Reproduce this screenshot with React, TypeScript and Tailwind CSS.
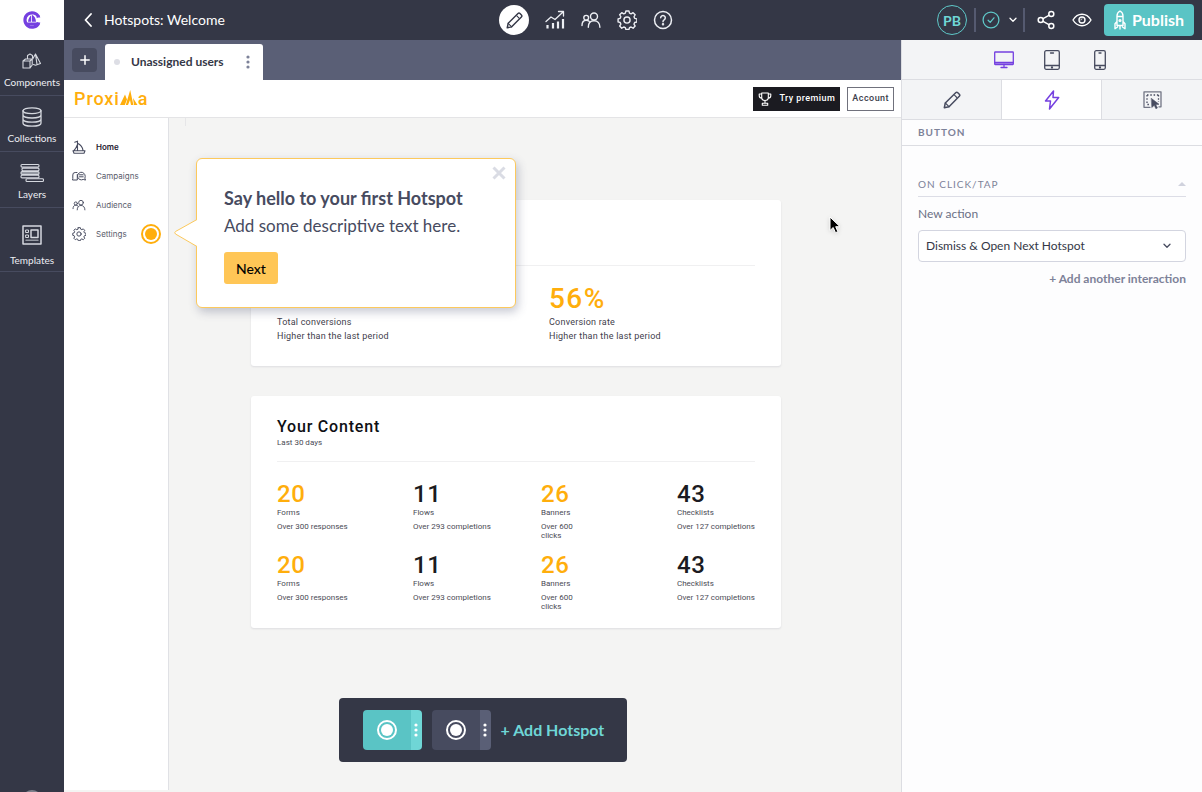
import React from "react";

type IconProps = { className?: string };

const stroke = {
  fill: "none",
  stroke: "currentColor",
  strokeLinecap: "round" as const,
  strokeLinejoin: "round" as const,
};

function Svg({ box, className, width = 1.5, children }: { box: string; className?: string; width?: number; children: React.ReactNode }) {
  return (
    <svg viewBox={box} className={className} {...stroke} strokeWidth={width} aria-hidden="true">
      {children}
    </svg>
  );
}

const LogoIcon = ({ className }: IconProps) => (
  <svg viewBox="0 0 18 18" className={className} aria-hidden="true">
    <path d="M15.700 6A7.200 7.200 0 1 0 15.700 12" fill="none" stroke="#7540e0" strokeWidth="3.200" />
    <path d="M8.200 4.200v6.600H5C5.300 8.100 6.500 5.600 8.200 4.200zM9 3.800c2.600 1.400 3.800 3.900 4 7H9zM4 11.600h11.500L14 14.400H5z" fill="#7540e0" />
    <path d="M13 6.500h4.300L16.500 4.500zM13 11.500h4.300L16.500 13.500z" fill="#7540e0" />
  </svg>
);

const PencilIcon = ({ className }: IconProps) => (
  <Svg box="0 0 18 18" className={className} width={1.5}>
    <path d="M1.300 16.700 2.300 12 12.700 1.700a1.500 1.500 0 0 1 2.100 0l1.500 1.500a1.500 1.500 0 0 1 0 2.100L6 15.700z" />
    <path d="M2.300 12 6 15.700M11.500 4.200l2.300 2.300" strokeWidth={1.100} />
  </Svg>
);

const ChartIcon = ({ className }: IconProps) => (
  <Svg box="0 0 20 20" className={className} width={1.3}>
    <path d="M1 11.500 6 7l4 2.500 7.500-7M13.500 1.500H18.500V6" />
    <path d="M2.500 15v3.500M8 13v5.500M13 11.500v7M18 9v9.500" strokeWidth={2.200} strokeLinecap="butt" />
  </Svg>
);

const PeopleIcon = ({ className }: IconProps) => (
  <Svg box="0 0 20 18" className={className} width={1.4}>
    <circle cx="13" cy="5.500" r="3.500" />
    <circle cx="5.200" cy="6.800" r="2.400" />
    <path d="M7.300 16.300c0-4 2.200-6.600 5.700-6.600s5.900 2.600 5.900 6.600M1 14.500c0-3.200 1.600-5.300 4.200-5.300 1.200 0 2.100.4 2.900 1.100" />
  </Svg>
);

const GearIcon = ({ className }: IconProps) => (
  <Svg box="0 0 24 24" className={className} width={1.7}>
    <path d="M10.200 2h3.600l.7 2.700 1.900.8 2.400-1.400 2.500 2.500-1.400 2.400.8 1.900 2.700.7v3.600l-2.700.7-.8 1.900 1.400 2.400-2.500 2.500-2.400-1.400-1.900.8-.7 2.300h-3.600l-.7-2.300-1.900-.8-2.400 1.400-2.500-2.500 1.400-2.400-.8-1.900L.8 15.200v-3.600l2.500-.7.8-1.900-1.400-2.400 2.500-2.500 2.400 1.400 1.900-.8z" transform="translate(.5 -.9)" />
    <circle cx="12" cy="12" r="3.700" />
  </Svg>
);

const HelpIcon = ({ className }: IconProps) => (
  <Svg box="0 0 20 20" className={className} width={1.5}>
    <circle cx="10" cy="10" r="8.500" />
    <path d="M7.700 7.800a2.300 2.300 0 1 1 3.500 2c-.8.500-1.200.9-1.200 1.900" />
    <circle cx="10" cy="14.300" r=".5" fill="currentColor" />
  </Svg>
);

const CheckCircleIcon = ({ className }: IconProps) => (
  <Svg box="0 0 20 20" className={className} width={1.4}>
    <circle cx="10" cy="10" r="8.800" />
    <path d="m6.800 10.300 2.300 2.300 4.200-5" />
  </Svg>
);

const ChevronDown = ({ className }: IconProps) => (
  <Svg box="0 0 10 6" className={className} width={1.3}>
    <path d="m2 1.200 3 3 3-3" />
  </Svg>
);

const ShareIcon = ({ className }: IconProps) => (
  <Svg box="0 0 18 20" className={className} width={1.500}>
    <circle cx="3.700" cy="10" r="2.500" />
    <circle cx="14.300" cy="4" r="2.500" />
    <circle cx="14.300" cy="16" r="2.500" />
    <path d="m6.100 8.700 5.800-3.300M6.100 11.300l5.800 3.300" />
  </Svg>
);

const EyeIcon = ({ className }: IconProps) => (
  <Svg box="0 0 20 14" className={className} width={1.400}>
    <path d="M1 7c2.200-3.700 5.300-5.800 9-5.800S16.800 3.300 19 7c-2.200 3.700-5.300 5.800-9 5.800S3.200 10.700 1 7z" />
    <circle cx="10" cy="7" r="3" />
    <path d="M8.800 7A1.200 1.200 0 0 1 10 5.800" strokeWidth={0.800} />
  </Svg>
);

const RocketIcon = ({ className }: IconProps) => (
  <Svg box="0 0 12 20" className={className} width={1.400}>
    <path d="M3 15.500V6c0-2 1.200-4 3-5 1.800 1 3 3 3 5v9.500zM3 6.500h6M3 11.500l-2 2.300v5L3.500 17M9 11.500l2 2.300v5L8.500 17M6 15.500V19" />
    <circle cx="6" cy="10.500" r=".9" />
  </Svg>
);

const ComponentsIcon = ({ className }: IconProps) => (
  <Svg box="0 0 20 18" className={className} width={1.100}>
    <path d="m13.500 2 5 9.500-5 1.700-2-.7M13.500 2l1.500 10.300M13.500 2l-2.800 5" />
    <path d="m1 9 2.500-2h6.700v6L8 16H1zM1 9h7l2.200-2M8 9v7M5.500 7V3.500L8 2l2.500 1.500V6" />
  </Svg>
);

const CollectionsIcon = ({ className }: IconProps) => (
  <Svg box="0 0 20 20" className={className} width={1.300}>
    <ellipse cx="10" cy="3.700" rx="9" ry="2.900" />
    <path d="M1 3.700v12.500c0 1.700 4 3 9 3s9-1.300 9-3V3.700M1 8c0 1.700 4 3 9 3s9-1.300 9-3M1 12.200c0 1.700 4 3 9 3s9-1.300 9-3" />
  </Svg>
);

const LayersIcon = ({ className }: IconProps) => (
  <Svg box="0 0 24 19" className={className} width={1.100}>
    <rect x="1" y="1" width="18" height="2.600" rx="1" />
    <rect x="2" y="4.600" width="17" height="2.600" rx="1" />
    <rect x="1" y="8" width="18" height="3" rx="1" fill="currentColor" fillOpacity=".6" />
    <rect x="1" y="11.800" width="18" height="2.600" rx="1" />
    <rect x="6" y="15.300" width="17.500" height="2.700" rx="1" />
  </Svg>
);

const TemplatesIcon = ({ className }: IconProps) => (
  <Svg box="0 0 20 20" className={className} width={1.500}>
    <rect x="1" y="1" width="18" height="18" />
    <rect x="9" y="5" width="7" height="7.500" />
    <rect x="4" y="5" width="2.500" height="2.500" strokeWidth={1} />
    <rect x="4" y="10" width="2.500" height="2.500" strokeWidth={1} />
    <path d="M4 15.200h12" strokeOpacity=".6" />
  </Svg>
);

const DesktopIcon = ({ className }: IconProps) => (
  <Svg box="0 0 20 18" className={className} width={1.300}>
    <rect x=".7" y="1" width="18.600" height="12.500" rx=".5" />
    <path d="M1 11.500h18M10 13.500V16M7 16.500h6" />
    <path d="M1 12.500h18" strokeOpacity=".5" />
  </Svg>
);

const TabletIcon = ({ className }: IconProps) => (
  <Svg box="0 0 16 20" className={className} width={1.300}>
    <rect x=".7" y=".7" width="14.600" height="18.600" rx="1.500" />
    <path d="M1 15.500h14M6.500 3h3" />
    <circle cx="8" cy="17.500" r=".5" fill="currentColor" />
  </Svg>
);

const PhoneIcon = ({ className }: IconProps) => (
  <Svg box="0 0 12 20" className={className} width={1.300}>
    <rect x=".7" y=".7" width="10.600" height="18.600" rx="1.500" />
    <path d="M1 15.500h10M5 3h2" />
    <circle cx="6" cy="17.500" r=".5" fill="currentColor" />
  </Svg>
);

const BoltIcon = ({ className }: IconProps) => (
  <Svg box="0 0 16 20" className={className} width={1.500}>
    <path d="M9.500 1 1.500 11h5l-1 8 9.200-11.500H9z" />
  </Svg>
);

const TargetIcon = ({ className }: IconProps) => (
  <Svg box="0 0 19 18" className={className} width={1.300}>
    <path d="M7 16.300H1V.8h17v15h-2" strokeOpacity=".75" />
    <path d="M4 4h11.500M4 4v9.500h3.500M15.500 4v7" strokeDasharray="1.500 1.800" strokeLinecap="butt" />
    <path d="m8.500 7.500 7.500 5.800-3.300.3 1.700 3.300-1.500.8-1.600-3.400-2.300 2z" fill="currentColor" strokeWidth={0.600} />
  </Svg>
);

const TrophyIcon = ({ className }: IconProps) => (
  <Svg box="0 0 14 14" className={className} width={1.100}>
    <path d="M3.700 1h6.600v4.500c0 2-1.300 3-3.300 3s-3.300-1-3.300-3zM3.700 2H1.200v1.500c0 1.700 1 2.700 2.700 2.700M10.300 2h2.500v1.500c0 1.700-1 2.700-2.700 2.700M7 8.500v2M4.300 13.200h5.400v-2H4.300z" />
  </Svg>
);

const BoatIcon = ({ className }: IconProps) => (
  <Svg box="0 0 14 14" className={className} width={1.100}>
    <path d="M1 10.700h12l-1 2.500H2zM5.500 1v9.500M5.500 3.300c3.500 1.700 5 4 5.500 7M5.500 4.500c-1 2.700-1.700 4.200-3.500 6M5.500 1.300 2.700 2.200" />
  </Svg>
);

const CampaignIcon = ({ className }: IconProps) => (
  <Svg box="0 0 14 10" className={className} width={1}>
    <path d="M5 1.500H3.200A2.400 2.400 0 0 0 .8 4v3.500L.5 9h4.800V3.500" />
    <path d="M13.200 5a3.800 3.800 0 1 0-2 3.400l2.300.7-.5-1.500zM7.500 3.800h3.700M7.500 5.800h3.700" />
  </Svg>
);

const sideTools = [
  { label: "Components", icon: <ComponentsIcon className="h-[18px] w-5" />, cls: "h-14 gap-[3px] pb-[5px]" },
  { label: "Collections", icon: <CollectionsIcon className="size-5" />, cls: "h-14 gap-[3px] pb-[5px]" },
  { label: "Layers", icon: <LayersIcon className="h-5 w-6" />, cls: "h-14 gap-[3px] pb-[5px]" },
  { label: "Templates", icon: <TemplatesIcon className="size-5" />, cls: "h-16 gap-[7px] pb-[3px]" },
];

function ToolSidebar() {
  return (
    <nav aria-label="Tools" className="flex w-16 shrink-0 flex-col bg-[#343746]">
      <a href="#home" aria-label="Dashboard" className="flex h-10 items-center justify-center bg-white">
        <LogoIcon className="size-[18px]" />
      </a>
      {sideTools.map((t) => (
        <button
          key={t.label}
          type="button"
          className={`${t.cls} flex flex-col items-center justify-end border-b border-[#474b5f] text-[10px] leading-4 text-[#eceef3]`}
        >
          <span className="flex h-5 items-center text-[#d5d8df]">{t.icon}</span>
          {t.label}
        </button>
      ))}
      <div className="mt-auto h-[2px] overflow-hidden">
        <div className="mx-auto size-5 rounded-full bg-[#7d808b]" />
      </div>
    </nav>
  );
}

function TopBar() {
  return (
    <header className="flex h-10 shrink-0 items-center bg-[#343746] pr-2 text-white">
      <div className="flex w-[435px] items-center gap-3 pl-5">
        <button type="button" aria-label="Back">
          <Svg box="0 0 8 14" className="h-[14px] w-2" width={1.800}>
            <path d="M7 1 1.500 7 7 13" />
          </Svg>
        </button>
        <h1 className="text-[14px] leading-5">Hotspots: Welcome</h1>
      </div>
      <nav aria-label="Sections" className="flex items-center gap-4 text-[#eceef3]">
        <button type="button" aria-label="Edit" className="flex size-[30px] items-center justify-center rounded-full bg-white text-[#343746]">
          <PencilIcon className="size-[17px]" />
        </button>
        <button type="button" aria-label="Analytics"><ChartIcon className="size-5" /></button>
        <button type="button" aria-label="Audience"><PeopleIcon className="h-[18px] w-5" /></button>
        <button type="button" aria-label="Settings"><GearIcon className="size-5" /></button>
        <button type="button" aria-label="Help"><HelpIcon className="size-5" /></button>
      </nav>
      <div className="ml-auto flex items-center">
        <span className="flex size-[30px] items-center justify-center rounded-full border border-[#5fc9c9] text-[14px] font-bold text-[#6fd6d6]">PB</span>
        <span className="ml-[7px] mr-[6px] h-6 w-[2px] bg-[#555a70]" />
        <button type="button" aria-label="Status" className="flex items-center gap-2">
          <CheckCircleIcon className="size-[18px] text-[#5fc9c9]" />
          <ChevronDown className="h-[6px] w-[10px]" />
        </button>
        <span className="ml-[5px] mr-3 h-6 w-[2px] bg-[#555a70]" />
        <button type="button" aria-label="Share"><ShareIcon className="h-5 w-[18px]" /></button>
        <button type="button" aria-label="Preview" className="ml-[17px] mr-3"><EyeIcon className="h-[14px] w-5" /></button>
        <button type="button" className="flex h-8 w-[90px] items-center justify-center gap-[6px] rounded-[4px] bg-[#5ac4c5] text-[16px] font-bold">
          <RocketIcon className="h-5 w-3" />
          Publish
        </button>
      </div>
    </header>
  );
}

function VerticalDots({ className }: IconProps) {
  return (
    <svg viewBox="0 0 4 14" className={className} fill="currentColor" aria-hidden="true">
      <circle cx="2" cy="2" r="1.600" />
      <circle cx="2" cy="7" r="1.600" />
      <circle cx="2" cy="12" r="1.600" />
    </svg>
  );
}

function TabBar() {
  return (
    <div className="flex h-10 shrink-0 items-end bg-[#5a5f76] pl-2">
      <button type="button" aria-label="Add segment" className="mb-2 mr-2 flex h-6 w-[25px] items-center justify-center rounded-[4px] bg-[#474b5f] text-white">
        <Svg box="0 0 10 10" className="size-[10px]" width={1.500}><path d="M5 .8v8.400M.8 5h8.400" /></Svg>
      </button>
      <div className="flex h-9 w-[158px] items-center whitespace-nowrap rounded-t-[3px] bg-white pl-[9px] text-[12px] font-bold text-[#343746]">
        <span className="mr-[11px] size-[6px] rounded-full bg-[#dddee5]" />
        Unassigned users
        <button type="button" aria-label="Tab options" className="ml-auto mr-[13px] text-[#7d8299]"><VerticalDots className="h-[14px] w-1" /></button>
      </div>
    </div>
  );
}

function SiteHeader() {
  return (
    <div className="flex h-[38px] shrink-0 items-center border-b border-[#e4e4e6] bg-white pl-[10px] pr-[7px] font-[Roboto,sans-serif]">
      <div className="flex items-baseline text-[18px] font-medium leading-6 tracking-wider text-[#ffae0c]" aria-label="Proxima">
        Proxi
        <svg viewBox="0 0 18 15" className="h-[15px] w-[18px]" fill="currentColor" aria-hidden="true">
          <path d="M0 15 5 4.500l2 5L4.800 15zM5.800 15 10.200 0l3.200 15H11l-1-5-2 5zM14 15l-1-7L17.500 15z" />
        </svg>
        a
      </div>
      <button type="button" className="ml-auto flex h-6 items-center gap-[7px] bg-[#1b1b21] px-[5px] text-[9px] font-medium tracking-wider text-white">
        <TrophyIcon className="size-[14px]" />
        Try premium
      </button>
      <button type="button" className="ml-[7px] flex h-6 items-center border border-[#70717c] px-1 text-[9px] font-medium tracking-wider text-[#3b3d4b]">
        Account
      </button>
    </div>
  );
}

const siteNav = [
  { label: "Home", icon: <BoatIcon className="size-[14px]" />, cls: "font-semibold text-[#1f2130]" },
  { label: "Campaigns", icon: <CampaignIcon className="h-[10px] w-[14px]" />, cls: "text-[#5a5d6b]" },
  { label: "Audience", icon: <PeopleIcon className="h-3 w-[14px]" />, cls: "text-[#5a5d6b]" },
  { label: "Settings", icon: <GearIcon className="size-[14px]" />, cls: "text-[#5a5d6b]" },
];

function SiteNav() {
  return (
    <nav aria-label="Site" className="mb-[2px] w-[105px] shrink-0 border-r border-[#e0e1e5] bg-white pt-[14px] font-[Inter,sans-serif] text-[8px]">
      {siteNav.map((n) => (
        <div key={n.label} className="flex h-[29px] items-center pl-2 pr-[7px]">
          <a href={"#" + n.label.toLowerCase()} className={`flex items-center gap-[10px] ${n.cls}`}>
            <span className="text-[#474b5f]">{n.icon}</span>
            {n.label}
          </a>
          {n.label === "Settings" && (
            <span className="ml-auto flex size-5 items-center justify-center rounded-full border-2 border-[#ffae0c]">
              <span className="size-3 rounded-full bg-[#ffae0c]" />
            </span>
          )}
        </div>
      ))}
    </nav>
  );
}

const contentStats = [
  { value: "20", label: "Forms", note: "Over 300 responses" },
  { value: "11", label: "Flows", note: "Over 293 completions" },
  { value: "26", label: "Banners", note: "Over 600 clicks" },
  { value: "43", label: "Checklists", note: "Over 127 completions" },
];

function StatRow() {
  return (
    <div className="grid h-[71px] grid-cols-[136fr_128fr_136fr_78fr]">
      {contentStats.map((s, i) => (
        <div key={s.label} className="text-[8px] leading-[9px] text-[#4a4b55]">
          <div className={`text-[24px] font-medium leading-7 tracking-wide ${i % 2 === 0 ? "text-[#ffae0c]" : "text-[#1b1b21]"}`}>{s.value}</div>
          <div>{s.label}</div>
          <div className={`mt-[5px] ${s.label === "Banners" ? "max-w-10" : "whitespace-nowrap"}`}>{s.note}</div>
        </div>
      ))}
    </div>
  );
}

function HotspotPopover() {
  return (
    <section
      aria-label="Hotspot"
      className="absolute left-[27px] top-10 h-[150px] w-80 rounded-[6px] border border-[#fcc95c] bg-white px-[27px] pt-[27px] font-[Lato,sans-serif] text-[#474b5f] shadow-[2px_4px_10px_rgba(71,75,110,0.3)]"
    >
      <svg viewBox="0 0 24 30" className="absolute -left-[23px] top-[59px] h-[30px] w-6" aria-hidden="true">
        <path d="M24 1 1.500 13.500Q0 14.700 1.500 16L24 29z" fill="#fff" />
        <path d="M23 1.500 1.500 13.500Q0 14.700 1.500 16L23 28.500" fill="none" stroke="#fcc95c" strokeWidth="1" />
      </svg>
      <button type="button" aria-label="Close" className="absolute right-[9px] top-[7px] text-[#dadce4]">
        <Svg box="0 0 14 14" className="size-[14px]" width={3}><path d="m1.500 1.500 11 11m0-11-11 11" strokeLinecap="butt" /></Svg>
      </button>
      <h2 className="whitespace-nowrap text-[18px] font-bold leading-6">Say hello to your first Hotspot</h2>
      <p className="mt-1 whitespace-nowrap text-[17px] leading-6">Add some descriptive text here.</p>
      <button type="button" className="mt-[14px] h-8 rounded-[3px] bg-[#ffc656] px-3 text-[14px] font-medium text-black">Next</button>
    </section>
  );
}

function Canvas() {
  return (
    <div className="relative min-w-0 flex-1 bg-[#f4f4f3] pl-[82px] pr-[120px] pt-[82px] font-[Roboto,sans-serif]">
      <span className="absolute left-4 top-0 h-2 w-px bg-[#e6e6e8]" />
      <section className="h-[166px] rounded-[3px] bg-white px-[26px] pt-[65px] shadow-[0_1px_2px_rgba(60,60,90,0.12)]">
        <div className="grid grid-cols-[272fr_206fr] border-t border-[#f0f0f1] pt-[17px] text-[9px] leading-[14px] tracking-wide text-[#3f404b]">
          <div>
            <div className="text-[28px] font-medium leading-8 text-[#ffae0c]">300</div>
            <div>Total conversions</div>
            <div>Higher than the last period</div>
          </div>
          <div>
            <div className="text-[28px] font-medium leading-8 tracking-wider text-[#ffae0c]">56%</div>
            <div>Conversion rate</div>
            <div>Higher than the last period</div>
          </div>
        </div>
      </section>
      <section className="mt-[30px] h-[232px] rounded-[3px] bg-white px-[26px] pt-[21px] shadow-[0_1px_2px_rgba(60,60,90,0.12)]">
        <h2 className="text-[16px] font-medium leading-5 tracking-wider text-[#0f0f14]">Your Content</h2>
        <p className="text-[8px] leading-[12px] text-[#4a4b55]">Last 30 days</p>
        <div className="mt-3 border-t border-[#f0f0f1] pt-[18px]">
          <StatRow />
          <StatRow />
        </div>
      </section>
      <HotspotPopover />
      <svg viewBox="0 0 12 18" className="absolute left-[660px] top-[98px] h-[18px] w-3 drop-shadow-sm" aria-hidden="true">
        <path d="M1 1v13.500l3.200-3 2.300 5.200 2.400-1-2.200-5H11z" fill="#000" stroke="#fff" strokeWidth="1" />
      </svg>
    </div>
  );
}

function HotspotTile({ label, main, side }: { label: string; main: string; side: string }) {
  return (
    <div className="flex h-10 overflow-hidden rounded-[4px] text-white">
      <button type="button" aria-label={label} className={`flex w-12 items-center justify-center ${main}`}>
        <span className="flex size-5 items-center justify-center rounded-full border-2 border-white">
          <span className="size-3 rounded-full bg-white" />
        </span>
      </button>
      <button type="button" aria-label={label + " options"} className={`flex w-[11px] items-center justify-center ${side}`}>
        <VerticalDots className="h-[14px] w-1" />
      </button>
    </div>
  );
}

function HotspotBar() {
  return (
    <div className="absolute bottom-[30px] left-1/2 flex h-16 w-72 -translate-x-1/2 items-center gap-[10px] rounded-[4px] bg-[#343746] pl-6">
      <HotspotTile label="Hotspot 1" main="bg-[#5ac4c5]" side="bg-[#6fd6d6]" />
      <HotspotTile label="Hotspot 2" main="bg-[#474b5f]" side="bg-[#5a5f76]" />
      <button type="button" className="whitespace-nowrap text-[16px] font-bold text-[#6fd6d6]">+ Add Hotspot</button>
    </div>
  );
}

function Inspector() {
  return (
    <aside className="flex w-[301px] shrink-0 flex-col border-l border-[#dcdde2] bg-[#fdfdfe] text-[#474b5f]">
      <div className="flex h-10 items-center justify-center border-b border-[#dcdde2] bg-[#f3f4f6]">
        <button type="button" aria-label="Desktop" className="flex w-12 justify-center text-[#7540e0]"><DesktopIcon className="h-[18px] w-5" /></button>
        <button type="button" aria-label="Tablet" className="flex w-12 justify-center"><TabletIcon className="h-5 w-4" /></button>
        <button type="button" aria-label="Phone" className="flex w-12 justify-center"><PhoneIcon className="h-5 w-3" /></button>
      </div>
      <div className="grid h-10 grid-cols-3 divide-x divide-[#dcdde2] border-b border-[#dcdde2] bg-[#f3f4f6]">
        <button type="button" aria-label="Style" className="flex items-center justify-center"><PencilIcon className="size-[18px]" /></button>
        <button type="button" aria-label="Interactions" className="flex items-center justify-center bg-white text-[#7540e0]"><BoltIcon className="h-5 w-4" /></button>
        <button type="button" aria-label="Targeting" className="flex items-center justify-center"><TargetIcon className="h-[18px] w-[19px]" /></button>
      </div>
      <h2 className="flex h-[26px] items-center border-b border-[#dcdde2] pl-4 text-[10px] font-bold tracking-widest text-[#7d8299]">BUTTON</h2>
      <div className="px-4 pt-[26px]">
        <div className="flex h-[25px] items-center justify-between border-b border-[#dcdde6] text-[10px] tracking-widest text-[#7d8299]">
          ON CLICK/TAP
          <svg viewBox="0 0 8 4" className="h-1 w-2" fill="#d0d2dd" aria-hidden="true"><path d="M0 4 4 0l4 4z" /></svg>
        </div>
        <label htmlFor="action" className="mt-[7px] block text-[12px] leading-5 text-[#6b7085]">New action</label>
        <div className="relative mt-[6px]">
          <select id="action" defaultValue="next" className="h-8 w-full appearance-none rounded-[4px] border border-[#d3d5e0] bg-white pl-[7px] text-[12px] text-[#343746]">
            <option value="next">Dismiss &amp; Open Next Hotspot</option>
          </select>
          <ChevronDown className="pointer-events-none absolute right-[14px] top-[13px] h-[6px] w-[10px] text-[#474b5f]" />
        </div>
        <button type="button" className="mt-[7px] block w-full text-right text-[12px] font-bold leading-5 text-[#7d8299]">+ Add another interaction</button>
      </div>
    </aside>
  );
}

export default function App() {
  return (
    <div className="flex h-screen overflow-hidden font-[Lato,sans-serif]">
      <ToolSidebar />
      <div className="flex min-w-0 flex-1 flex-col">
        <TopBar />
        <div className="flex min-h-0 flex-1">
          <main className="relative flex min-w-0 flex-1 flex-col bg-[#f4f4f3]">
            <TabBar />
            <SiteHeader />
            <div className="flex min-h-0 flex-1">
              <SiteNav />
              <Canvas />
            </div>
            <HotspotBar />
          </main>
          <Inspector />
        </div>
      </div>
    </div>
  );
}
